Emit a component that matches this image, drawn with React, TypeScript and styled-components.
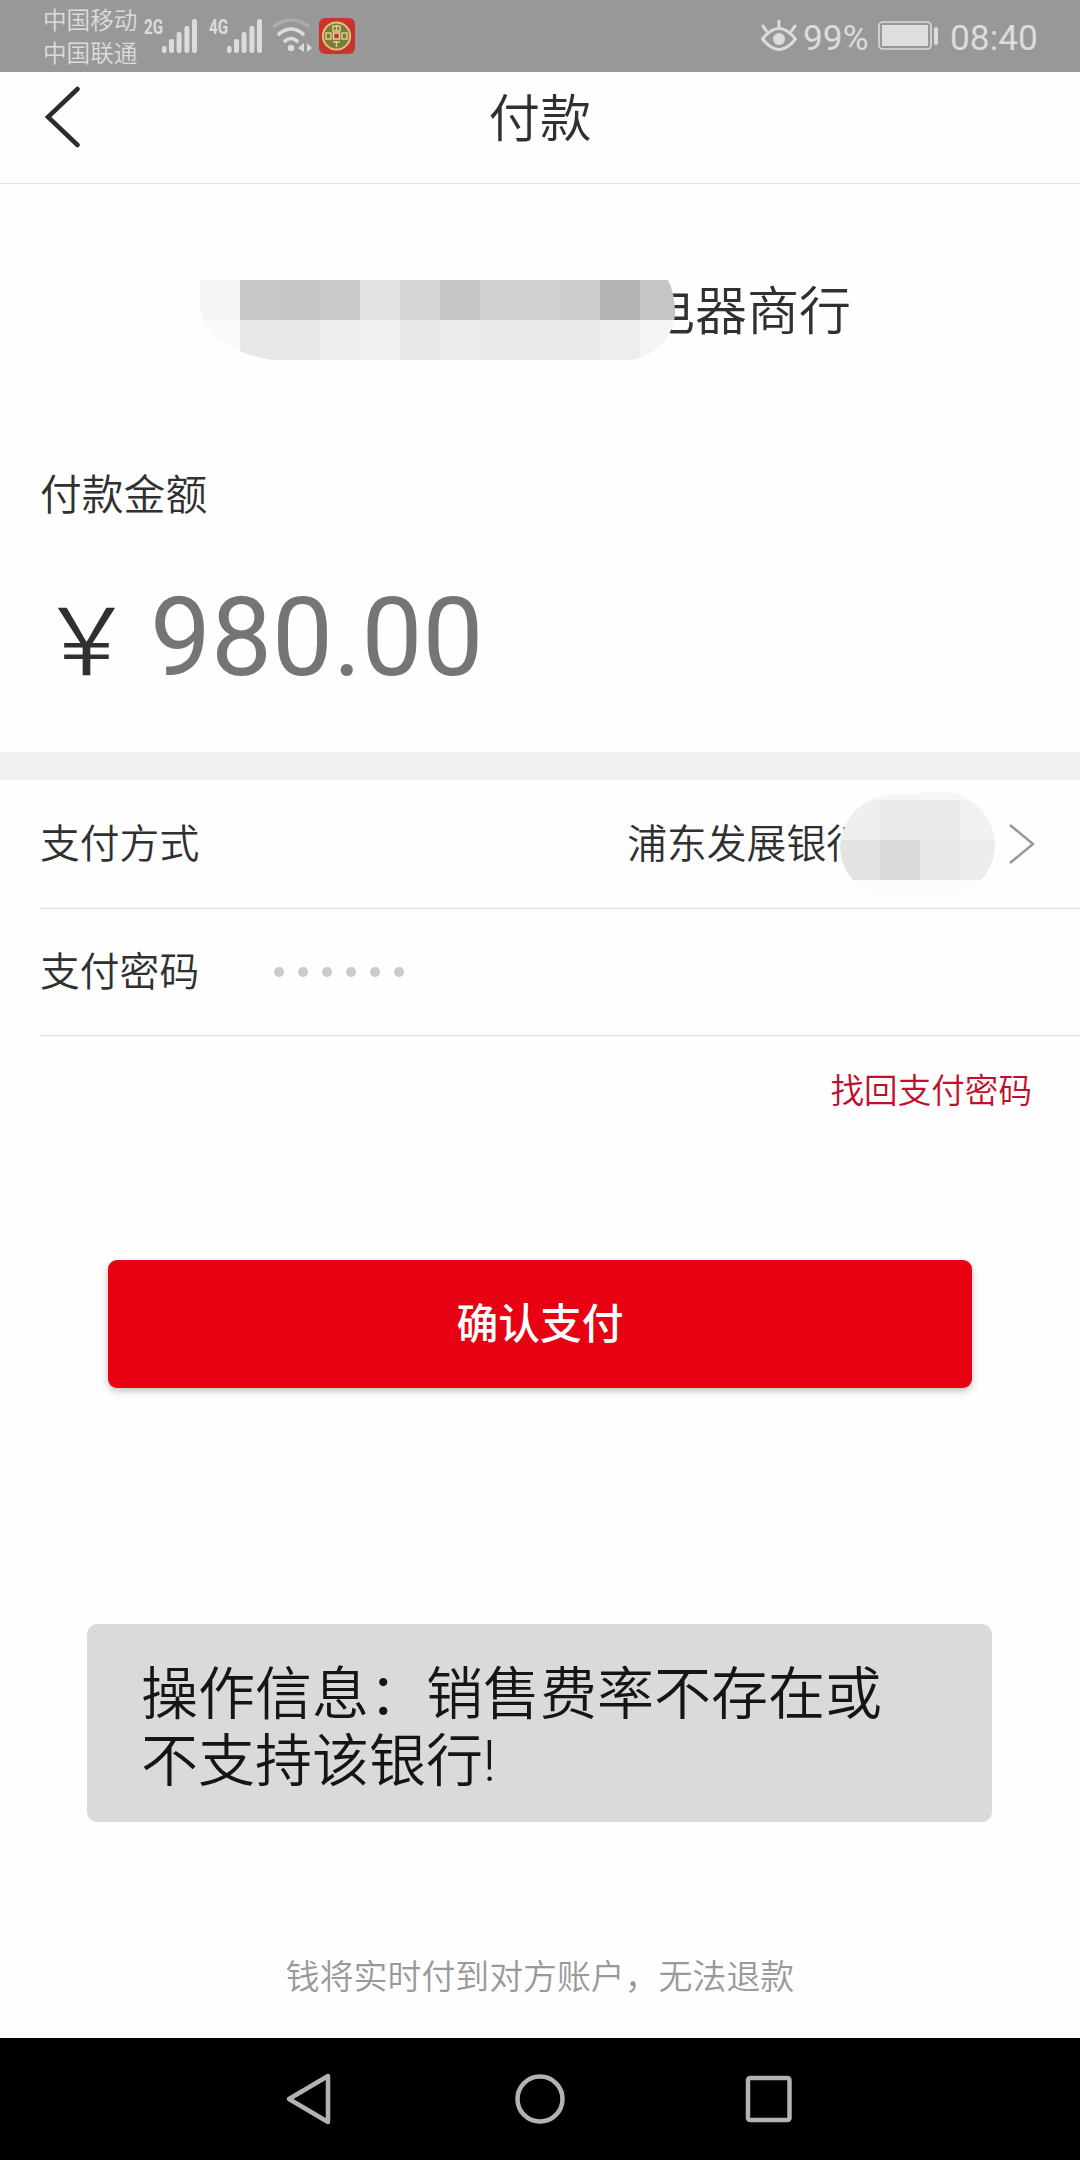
import React from "react";
import styled, { createGlobalStyle } from "styled-components";

const Global = createGlobalStyle`
  * { box-sizing: border-box; }
  body {
    margin: 0;
    background: #fefefe;
    font-family: Roboto, "Noto Sans CJK SC", sans-serif;
    font-weight: 350;
  }
`;

const Screen = styled.div`
  width: 1080px;
  height: 2160px;
  display: flex;
  flex-direction: column;
  background: #fefefe;
  color: #303030;
  overflow: hidden;
`;

const StatusBar = styled.header`
  height: 72px;
  flex: none;
  display: flex;
  align-items: center;
  justify-content: space-between;
  padding: 0 43px 0 43px;
  background: #989898;
  color: #dcdcdc;
`;

const StatusGroup = styled.div`
  display: flex;
  align-items: center;
  height: 72px;
`;

const Carriers = styled.div`
  width: 97px;
  font-size: 23.6px;
  line-height: 33px;
  padding-top: 4px;
  white-space: nowrap;
`;

const StatusText = styled.span<{ $width: number; $indent: number }>`
  width: ${(p) => p.$width}px;
  padding: 4px 0 0 ${(p) => p.$indent}px;
  font-size: 35.3px;
  font-weight: 400;
  line-height: 40px;
  white-space: nowrap;
`;

const SignalBox = styled.div<{ $gap: number }>`
  display: flex;
  align-items: flex-start;
  height: 34px;
  margin-left: ${(p) => p.$gap}px;
`;

const NetLabel = styled.span`
  width: 18px;
  font-size: 20px;
  line-height: 16px;
  font-weight: 700;
  transform: scaleX(0.76);
  transform-origin: left center;
`;

const WifiSlot = styled.span`
  display: flex;
  margin: 0 5px 0 9px;
`;

const TitleBar = styled.div`
  height: 112px;
  flex: none;
  display: grid;
  grid-template-columns: 140px 1fr 140px;
  padding-bottom: 20px;
  align-items: center;
  border-bottom: 1px solid #e4e4e4;
`;

const Back = styled.button`
  border: 0;
  padding: 0 0 2px 43px;
  background: none;
  display: flex;
`;

const Title = styled.h1`
  margin: 0;
  padding-top: 5px;
  text-align: center;
  font-size: 51.5px;
  font-weight: 350;
  line-height: 60px;
`;

const Merchant = styled.section`
  height: 252px;
  flex: none;
  display: flex;
  align-items: center;
  padding-left: 200px;
`;

const Mosaic = styled.div`
  position: relative;
  z-index: 1;
  display: grid;
  grid-template-columns: repeat(12, 40px);
  grid-template-rows: 40px 40px;
  width: 475px;
  height: 80px;
  margin-top: 20px;
  flex: none;
  clip-path: path("M0 0H468Q475 14 475 32C475 54 458 72 440 78Q435 80 425 80H72Q62 78 53 76C28 68 10 56 3 40Q0 34 0 27Z");
`;

const Cell = styled.i<{ $tone: string }>`
  background: ${(p) => p.$tone};
`;

const MerchantName = styled.span`
  margin: 6px 0 0 -32px;
  font-size: 52px;
  line-height: 60px;
`;

const Amount = styled.section`
  height: 316px;
  flex: none;
  padding: 30px 40px 0;
`;

const AmountLabel = styled.div`
  font-size: 41.8px;
  line-height: 60px;
`;

const AmountRow = styled.div`
  display: flex;
  align-items: baseline;
  margin-top: 49px;
  line-height: 120px;
`;

const Yen = styled.span`
  width: 110px;
  font-family: "Noto Sans CJK SC", sans-serif;
  font-size: 93px;
  line-height: 120px;
`;

const Figure = styled.span`
  font-size: 108.5px;
  font-weight: 400;
  color: #757575;
`;

const Band = styled.div`
  height: 28px;
  flex: none;
  background: #f1f1f1;
`;

const FormRow = styled.div<{ $height: number }>`
  height: ${(p) => p.$height}px;
  flex: none;
  margin-left: 40px;
  display: flex;
  align-items: center;
  font-size: 39.8px;
  border-bottom: 1px solid #e0e0e0;
`;

const RowLabel = styled.span`
  width: 234px;
  padding-bottom: 7px;
`;

const Bank = styled.div`
  flex: 1;
  display: flex;
  align-items: center;
  justify-content: flex-end;
  padding-right: 45px;
`;

const BankName = styled.span`
  padding-bottom: 7px;
  white-space: nowrap;
`;

const AccountMosaic = styled.div`
  position: relative;
  z-index: 1;
  display: grid;
  grid-template-columns: 40px 40px 40px 35px;
  grid-template-rows: 8px 40px 40px 20px;
  width: 155px;
  height: 108px;
  margin: 3px 14px 0 -26px;
  clip-path: path("M0 56C2 28 20 5 54 3H76Q84 0 98 0C132 0 155 26 155 53C155 82 134 102 100 107H60C24 106 2 86 0 56Z");
`;

const Dots = styled.div`
  display: flex;
  gap: 14.6px;
`;

const Dot = styled.i`
  width: 9.5px;
  height: 10px;
  border-radius: 50%;
  background: #cbcbcb;
`;

const Recover = styled.a`
  align-self: flex-end;
  margin: 31px 48px 0 0;
  font-size: 33.6px;
  line-height: 50px;
  color: #c20e2c;
`;

const Confirm = styled.button`
  width: 864px;
  height: 128px;
  flex: none;
  align-self: center;
  margin-top: 143px;
  padding: 0 0 7px;
  border: 0;
  border-radius: 9px;
  background: #e80013;
  box-shadow: 0 3px 7px rgba(0, 0, 0, 0.25);
  color: #fff;
  font-family: inherit;
  font-size: 41.8px;
  font-weight: 500;
`;

const Toast = styled.div`
  width: 905px;
  height: 198px;
  flex: none;
  margin: 236px 0 0 87px;
  padding: 37px 54px 0;
  border-radius: 10px;
  background: #dbdadb;
  color: #151515;
  font-size: 57px;
  line-height: 67px;
`;

const Notice = styled.p`
  margin: 131px 0 0;
  text-align: center;
  font-size: 33.9px;
  line-height: 50px;
  color: #999;
`;

const NavBar = styled.nav`
  height: 122px;
  flex: none;
  margin-top: auto;
  display: flex;
  justify-content: center;
  gap: 180px;
  align-items: center;
  background: #000;
`;

const MERCHANT_TONES =
  "f5f5f5 c8c8c8 c6c6c6 cacaca e2e2e2 d5d5d5 c5c5c5 d0d0d0 d1d1d1 cdcdcd b4b4b4 c5c5c5 fafafa e8e8e8 e7e7e7 eeeeee f0f0f0 e7e7e7 ebebeb eaeaea e9e9e9 eaeaea ededed f4f4f4".split(" ");
const ACCOUNT_TONES =
  "f5f5f5 f5f5f5 f6f6f6 f6f6f6 efefef eaeaea eaeaea f1f1f1 e3e3e3 dadada e7e7e7 ececec fcfcfc fcfcfc fcfcfc fcfcfc".split(" ");

function Signal({ label, gap }: { label: string; gap: number }) {
  return (
    <SignalBox $gap={gap}>
      <NetLabel>{label}</NetLabel>
      <svg width="36" height="34" viewBox="0 0 36 34" fill="#dcdcdc">
        <rect x="0" y="27" width="4.6" height="7" rx="2" />
        <rect x="7" y="20" width="5" height="14" rx="2" />
        <rect x="14.6" y="13" width="5" height="21" rx="2" />
        <rect x="22.4" y="7" width="5" height="27" rx="2" />
        <rect x="30" y="0" width="5" height="34" rx="2" />
      </svg>
    </SignalBox>
  );
}

const WifiIcon = () => (
  <svg width="42" height="36" viewBox="272 18 42 36" fill="none" stroke="#dcdcdc" strokeWidth="3.6" strokeLinecap="round">
    <path d="M274 26Q291 14 308 26" stroke="#acacac" />
    <path d="M279 34Q291 24 303 34" />
    <path d="M285 41Q291 36 297 41" />
    <circle cx="291" cy="48" r="3.3" fill="#dcdcdc" stroke="none" />
    <path d="M304 43v9l-6-4zM307 43v9l5-4z" fill="#dcdcdc" stroke="none" />
  </svg>
);

const CoinIcon = () => (
  <svg width="36" height="36" viewBox="0 0 36 36">
    <rect width="36" height="36" rx="6" fill="#c9352c" />
    <circle cx="17.5" cy="18" r="13.6" fill="#7d7b35" stroke="#e3c37c" strokeWidth="2" />
    <path d="M14 8h7v5h-7zM17.5 7v6M7 15h5v6H7zM23 15h5v6h-5zM14 24h7M17.5 23v6" fill="none" stroke="#d8cf92" strokeWidth="1.5" />
    <rect x="14.5" y="15" width="6" height="6" fill="#c9352c" stroke="#ecd9a0" strokeWidth="1.4" />
  </svg>
);

const EyeIcon = () => (
  <svg width="38" height="34" viewBox="759 20 38 34" fill="none" stroke="#dcdcdc" strokeWidth="3" strokeLinecap="round">
    <path d="M761.5 40Q778 19 794.5 40Q778 61 761.5 40Z" strokeLinejoin="round" />
    <circle cx="778" cy="40" r="6" fill="#dcdcdc" stroke="none" />
    <path d="M778 22v7M762 27l3.5 5M794 27l-3.5 5" />
  </svg>
);

const BatteryIcon = () => (
  <svg width="61" height="30" viewBox="0 0 61 30">
    <rect x="1" y="1" width="52" height="27" rx="4" fill="none" stroke="#dcdcdc" strokeWidth="1.6" />
    <rect x="4" y="4" width="46" height="21" fill="#dedede" />
    <rect x="56" y="6" width="4" height="18" rx="2" fill="#dcdcdc" />
  </svg>
);

export default function App() {
  return (
    <Screen>
      <Global />
      <StatusBar>
        <StatusGroup>
          <Carriers>
            <div>中国移动</div>
            <div>中国联通</div>
          </Carriers>
          <Signal label="2G" gap={4} />
          <Signal label="4G" gap={11} />
          <WifiSlot>
            <WifiIcon />
          </WifiSlot>
          <CoinIcon />
        </StatusGroup>
        <StatusGroup>
          <EyeIcon />
          <StatusText $width={80} $indent={5}>99%</StatusText>
          <BatteryIcon />
          <StatusText $width={98} $indent={11}>08:40</StatusText>
        </StatusGroup>
      </StatusBar>

      <TitleBar>
        <Back aria-label="返回">
          <svg width="38" height="62" viewBox="0 0 38 62" fill="none" stroke="#2c2c2c" strokeWidth="4.5" strokeLinecap="round">
            <path d="M34.5 3L5 31L34.5 59" />
          </svg>
        </Back>
        <Title>付款</Title>
      </TitleBar>

      <Merchant>
        <Mosaic>
          {MERCHANT_TONES.map((t, i) => (
            <Cell key={i} $tone={"#" + t} />
          ))}
        </Mosaic>
        <MerchantName>电器商行</MerchantName>
      </Merchant>

      <Amount>
        <AmountLabel>付款金额</AmountLabel>
        <AmountRow>
          <Yen>￥</Yen>
          <Figure>980.00</Figure>
        </AmountRow>
      </Amount>

      <Band />

      <FormRow $height={129}>
        <RowLabel>支付方式</RowLabel>
        <Bank>
          <BankName>浦东发展银行</BankName>
          <AccountMosaic>
            {ACCOUNT_TONES.map((t, i) => (
              <Cell key={i} $tone={"#" + t} />
            ))}
          </AccountMosaic>
          <svg width="26" height="40" viewBox="0 0 26 40" fill="none" stroke="#989898" strokeWidth="2.5">
            <path d="M1 1L24 20L1 39" />
          </svg>
        </Bank>
      </FormRow>
      <FormRow $height={127}>
        <RowLabel>支付密码</RowLabel>
        <Dots>
          {[0, 1, 2, 3, 4, 5].map((i) => (
            <Dot key={i} />
          ))}
        </Dots>
      </FormRow>

      <Recover>找回支付密码</Recover>
      <Confirm>确认支付</Confirm>
      <Toast>
        操作信息：销售费率不存在或
        <br />
        不支持该银行!
      </Toast>
      <Notice>钱将实时付到对方账户，无法退款</Notice>

      <NavBar>
        <svg width="50" height="54" viewBox="0 0 50 54" fill="none" stroke="#b3b3b3" strokeWidth="4.5" strokeLinejoin="round">
          <path d="M43 4V50L4 27Z" />
        </svg>
        <svg width="50" height="50" viewBox="0 0 50 50" fill="none" stroke="#b3b3b3" strokeWidth="4.5">
          <circle cx="25" cy="25" r="22.5" />
        </svg>
        <svg width="50" height="50" viewBox="0 0 50 50" fill="none" stroke="#b3b3b3" strokeWidth="4.5">
          <rect x="3" y="4" width="41.5" height="42" rx="2" />
        </svg>
      </NavBar>
    </Screen>
  );
}
